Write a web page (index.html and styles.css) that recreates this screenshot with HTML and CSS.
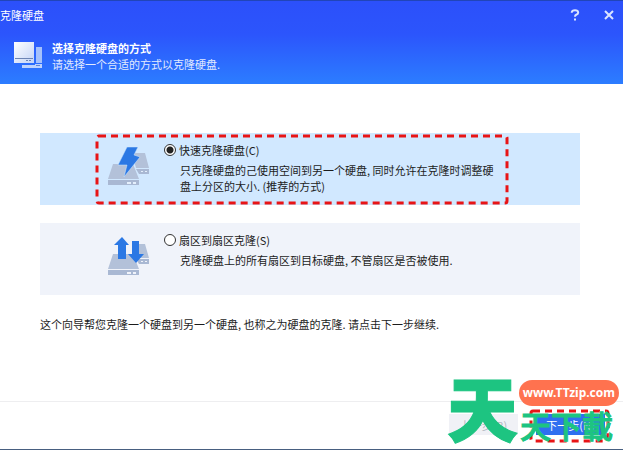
FILE: index.html
```html
<!DOCTYPE html>
<html lang="zh-CN">
<head>
    <meta charset="UTF-8">
    <meta name="viewport" content="width=device-width, initial-scale=1.0">
    <title>克隆硬盘</title>
    <link rel="stylesheet" href="styles.css">
</head>
<body>
    <form class="wizard">
        <header class="header">
            <div class="title-bar">
                <span class="window-title">克隆硬盘</span>
                <button type="button" class="window-button" aria-label="帮助">
                    <svg width="10" height="12" viewBox="0 0 10 12"><path d="M1.800 3.800V3.200Q2 1.200 5 1.200T8.200 3.500Q8.200 5 6.200 5.800Q5 6.300 5 7.800" /><path d="M5 9.600V11.400" /></svg>
                </button>
                <button type="button" class="window-button" aria-label="关闭">
                    <svg width="10" height="10" viewBox="0 0 10 10"><path d="M1 1L9 9M9 1L1 9" /></svg>
                </button>
            </div>
            <div class="heading">
                <svg class="heading-icon" width="29" height="28" viewBox="0 0 29 28">
                    <defs>
                        <linearGradient id="disk" x1="0" y1="0" x2="1" y2="1">
                            <stop offset="0" stop-color="#ffffff" />
                            <stop offset="1" stop-color="#c3d3f6" />
                        </linearGradient>
                    </defs>
                    <path fill="#a5c1fb" d="M22 5h6v16h-6z" />
                    <path fill="#bdd2fd" d="M8 23h13v-1h7v4H8z" />
                    <path fill="#5b83d8" d="M22 23h4v1h-4z" />
                    <path fill="url(#disk)" d="M0 0h20v21H0z" />
                    <path fill="#6d84b4" d="M1 16h18v1H1zM12 18h2v1h-2zM15 18h2v1h-2z" />
                </svg>
                <div>
                    <h1>选择克隆硬盘的方式</h1>
                    <p>请选择一个合适的方式以克隆硬盘.</p>
                </div>
            </div>
        </header>

        <main class="content">
            <div class="option selected">
                <svg class="option-icon" width="41" height="40" viewBox="0 0 41 40">
                    <path fill="#b3c1d9" d="M24 7h13l4 15H28z" />
                    <path fill="#a9b8d3" d="M28 23h13v5H31z" />
                    <path fill="#e4effc" d="M33 25h2v1h-2zM37 25h2v1h-2z" />
                    <path fill="#b3c1d9" d="M5 18h20l6 15H0z" />
                    <path fill="#a9b8d3" d="M0 34h31v5H0z" />
                    <path fill="#e4effc" d="M19 36h4v2h-4zM25 36h3v2h-3z" />
                    <path fill="#2b78e4" stroke="#d1e8ff" stroke-width=".5" d="M19 1h11l-4 8 6 2L16 31l3-12h-9z" />
                </svg>
                <div class="option-text">
                    <label><input type="radio" name="mode" checked>快速克隆硬盘(C)</label>
                    <p>只克隆硬盘的己使用空间到另一个硬盘, 同时允许在克隆时调整硬盘上分区的大小. (推荐的方式)</p>
                </div>
                <svg class="marker"><rect width="100%" height="100%" rx="2" /></svg>
            </div>

            <div class="option">
                <svg class="option-icon" width="41" height="40" viewBox="0 0 41 40">
                    <path fill="#b3c1d9" d="M26 8h11l4 14H28z" />
                    <path fill="#a9b8d3" d="M28 23h13v5H31z" />
                    <path fill="#f0f3fa" d="M33 25h2v1h-2zM37 25h2v1h-2z" />
                    <path fill="#b3c1d9" d="M5 18h20l6 15H0z" />
                    <path fill="#a9b8d3" d="M0 34h31v5H0z" />
                    <path fill="#f0f3fa" d="M19 36h4v2h-4zM25 36h3v2h-3z" />
                    <path fill="#2b78e4" d="M14 1l7 8h-3v14h-8V9H6zM24 5h7v13h5l-8 9-8-9h4z" />
                </svg>
                <div class="option-text">
                    <label><input type="radio" name="mode">扇区到扇区克隆(S)</label>
                    <p>克隆硬盘上的所有扇区到目标硬盘, 不管扇区是否被使用.</p>
                </div>
            </div>

            <p class="hint">这个向导帮您克隆一个硬盘到另一个硬盘, 也称之为硬盘的克隆. 请点击下一步继续.</p>
        </main>

        <footer class="footer">
            <button type="button" class="button" disabled>上一步(B)</button>
            <div class="next">
                <button type="submit" class="button primary">下一步(N)</button>
                <svg class="marker"><rect width="100%" height="100%" rx="2" /></svg>
            </div>
            <div class="watermark">
                <span class="watermark-large">天</span>
                <span class="watermark-site">www.TTzip.com</span>
                <span class="watermark-small">天下載</span>
            </div>
        </footer>
    </form>
</body>
</html>
```
FILE: styles.css
```css
* {
    margin: 0;
    padding: 0;
    box-sizing: border-box;
}

body {
    background-color: #ffffff;
    color: #1c1c1c;
    font-family: "Noto Sans CJK SC", sans-serif;
    font-size: 11px;
    line-height: 16px;
}

.wizard {
    display: flex;
    flex-direction: column;
    min-height: 100vh;
    border-bottom: 1px solid #475f80;
}

.header {
    height: 84px;
    border-top: 1px solid #2145b8;
    background: linear-gradient(180deg, #2c50fa 0%, #2c55fc 40%, #2c7dff 100%);
    color: #ffffff;
}

.title-bar {
    display: flex;
    align-items: center;
    height: 28px;
    padding-right: 8px;
    gap: 22px;
}

.window-title {
    flex: 1;
}

.window-button {
    display: flex;
    justify-content: center;
    width: 12px;
    border: none;
    background: none;
}

.window-button svg {
    fill: none;
    stroke: #dbe5ff;
    stroke-width: 2;
}

.heading {
    display: flex;
    align-items: center;
    gap: 9px;
    padding: 11px 14px;
}

.heading h1 {
    font-size: 11px;
    line-height: 16px;
}

.heading p {
    line-height: 16px;
    color: #e2eaff;
}

.content {
    flex: 1;
    display: flex;
    flex-direction: column;
    gap: 18px;
    padding: 49px 43px 0 40px;
}

.option {
    position: relative;
    display: flex;
    gap: 15px;
    min-height: 72px;
    padding: 9px 68px;
    background: #f0f3fa;
}

.option.selected {
    background: #d1e8ff;
}

.option-icon {
    flex: none;
    margin-top: 4px;
}

.option-text label {
    display: flex;
    align-items: center;
    gap: 3px;
}

.option-text input {
    appearance: none;
    width: 12px;
    height: 12px;
    border: 1px solid #333333;
    border-radius: 50%;
    background: #ffffff;
}

.option-text input:checked {
    background: radial-gradient(circle, #222222 3px, #ffffff 4px);
}

.option-text p {
    max-width: 335px;
    margin-top: 4px;
    padding-left: 16px;
}

/* Dashed frame over an item */
.marker {
    position: absolute;
    overflow: visible;
    pointer-events: none;
}

.marker rect {
    fill: none;
    stroke: #e81416;
    stroke-width: 3;
    stroke-dasharray: 7 5;
}

.option .marker {
    top: 3px;
    left: 57px;
    width: calc(100% - 130px);
    height: calc(100% - 5px);
}

.hint {
    margin-top: 3px;
}

.footer {
    position: relative;
    display: flex;
    justify-content: flex-end;
    gap: 18px;
    height: 48px;
    padding: 12px 18px 0;
    border-top: 1px solid #eeeef0;
}

.button {
    width: 69px;
    height: 21px;
    border: none;
    background: #2f6ff0;
    color: #ffffff;
    font: inherit;
}

.button:disabled {
    background: #f0f1f6;
    color: #b4b7c0;
}

.next {
    position: relative;
}

.next .marker {
    top: -3px;
    left: -5px;
    width: 77px;
    height: 30px;
}

.watermark {
    position: absolute;
    right: 4px;
    bottom: 0;
    width: 170px;
    height: 76px;
    pointer-events: none;
    white-space: nowrap;
}

.watermark span {
    position: absolute;
}

.watermark-large,
.watermark-small {
    color: #1dc481;
    -webkit-text-stroke: 1px #1dc481;
}

.watermark-large {
    left: -2px;
    top: -20px;
    font: 900 71px/104px "Noto Sans CJK SC", sans-serif;
}

.watermark-site {
    right: 0;
    top: 7px;
    padding: 0 4px;
    border-radius: 13px;
    background: #ff724f;
    color: #ffffff;
    font: bold 12px/26px "Noto Sans", sans-serif;
}

.watermark-small {
    left: 71px;
    top: 29px;
    font: 500 31px/46px "Noto Sans CJK TC", sans-serif;
}
```
